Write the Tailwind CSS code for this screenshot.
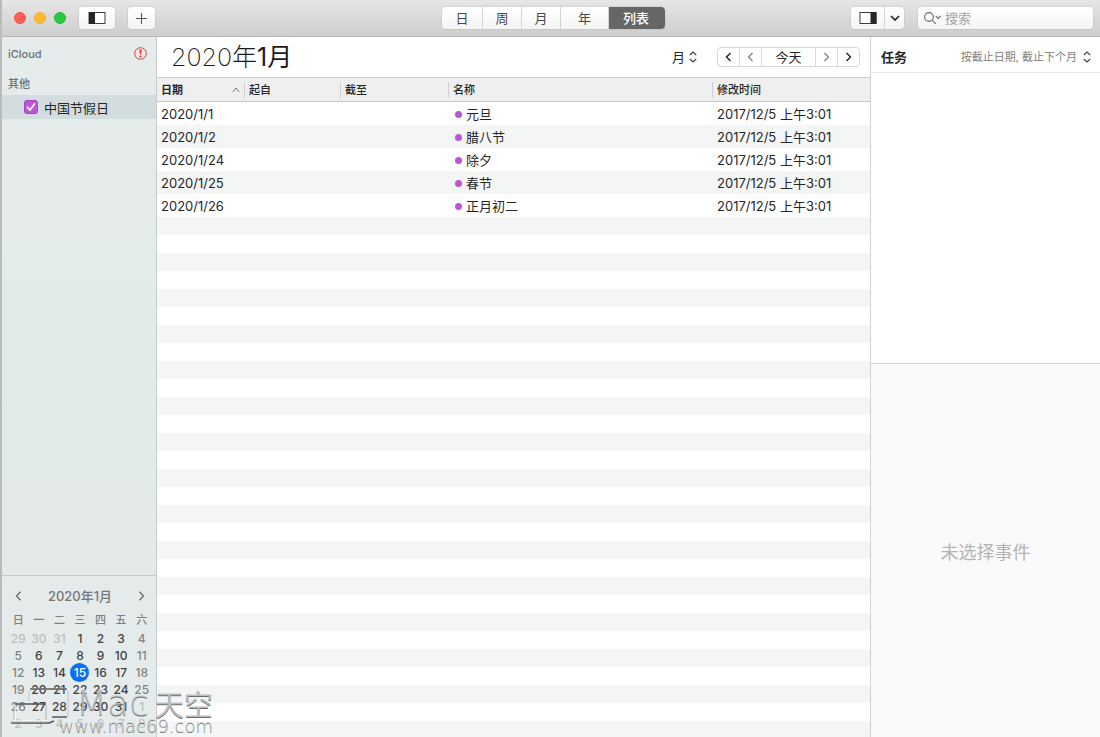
<!DOCTYPE html>
<html lang="zh-CN">
<head>
<meta charset="utf-8">
<meta name="viewport" content="width=device-width, initial-scale=1">
<title>日历</title>
<script src="https://cdn.jsdelivr.net/npm/@tailwindcss/browser@4"></script>
</head>
<body class="flex h-screen flex-col overflow-hidden border-l-2 border-[#b9bbbc] bg-white font-['Inter','Noto_Sans_CJK_SC',sans-serif] text-[13px] leading-5 text-[#262626]">

<header class="flex h-[37px] shrink-0 items-center border-b border-[#b4b4b4] bg-linear-to-b from-[#e6e6e6] to-[#cecece] pr-[7px] pl-3">
  <div class="flex flex-1 items-center">
    <div class="flex gap-2">
      <button aria-label="关闭" class="size-3 rounded-full border border-[#ee5750] bg-[#fc5e57]"></button>
      <button aria-label="最小化" class="size-3 rounded-full border border-[#efae2c] bg-[#fdbc2f]"></button>
      <button aria-label="缩放" class="size-3 rounded-full border border-[#25b93b] bg-[#28c840]"></button>
    </div>
    <button aria-label="显示日历列表" class="ml-[13px] flex h-[22px] w-9 items-center justify-center rounded bg-linear-to-b from-white to-[#f4f4f4] shadow-[0_0_1px_1px_rgba(0,0,0,0.06)]">
      <svg width="18" height="14" viewBox="0 0 18 14"><rect x="1" y="1.5" width="16" height="11" fill="#fff" stroke="#3c3c3c"/><rect x="1" y="1" width="6" height="12" fill="#262626"/></svg>
    </button>
    <button aria-label="新建事件" class="ml-[13px] flex h-[22px] w-[27px] items-center justify-center rounded bg-linear-to-b from-white to-[#f4f4f4] shadow-[0_0_1px_1px_rgba(0,0,0,0.06)]">
      <svg width="13" height="13" viewBox="0 0 13 13" stroke="#555" stroke-width="1.1"><path d="M6.5 1v11M1 6.5h11"/></svg>
    </button>
  </div>
  <nav aria-label="视图" class="flex h-[22px] divide-x divide-[#d4d4d4] overflow-hidden rounded bg-linear-to-b from-white to-[#f4f4f4] text-[#484848] shadow-[0_0_1px_1px_rgba(0,0,0,0.06)]">
    <button class="w-[41px]">日</button>
    <button class="w-[39px]">周</button>
    <button class="w-[39px]">月</button>
    <button class="w-12">年</button>
    <button aria-pressed="true" class="w-14 bg-[#666] pr-[2px] font-medium text-white">列表</button>
  </nav>
  <div class="flex flex-1 justify-end gap-[14px]">
    <div class="flex h-[22px] divide-x divide-[#d4d4d4] rounded bg-linear-to-b from-white to-[#f4f4f4] shadow-[0_0_1px_1px_rgba(0,0,0,0.06)]">
      <button aria-label="显示任务" class="flex w-[34px] items-center justify-center">
        <svg width="18" height="14" viewBox="0 0 18 14"><rect x="1" y="1.5" width="16" height="11" fill="#fff" stroke="#3c3c3c"/><rect x="11.500" y="1" width="6" height="12" fill="#262626"/></svg>
      </button>
      <button aria-label="更多选项" class="flex w-[19px] items-center justify-center">
        <svg width="10" height="8" viewBox="0 0 10 8" fill="none" stroke="#262626" stroke-width="1.7"><path d="M1 2l4 4 4-4"/></svg>
      </button>
    </div>
    <label class="flex h-[22px] w-[175px] items-center rounded bg-linear-to-b from-white to-[#f4f4f4] pl-[6px] shadow-[0_0_1px_1px_rgba(0,0,0,0.06)]">
      <svg class="shrink-0" width="18" height="14" viewBox="0 0 18 14" fill="none" stroke="#6a6a6a" stroke-width="1.1"><circle cx="5" cy="6" r="4.400"/><path d="M8.200 9.200l3.600 3.600M11.800 5l2.400 2.400L16.600 5"/></svg>
      <input type="search" aria-label="搜索" placeholder="搜索" class="ml-[3px] min-w-0 flex-1 bg-transparent outline-none placeholder:text-[#a3a3a3]">
    </label>
  </div>
</header>

<div class="flex min-h-0 flex-1">
  <aside class="flex w-[155px] shrink-0 flex-col border-r border-[#c5cbcc] bg-linear-to-b from-[#e5eceb] via-[#e3eaea] to-[#e6ebeb]">
    <div class="flex h-[34px] items-center justify-between pr-[9px] pl-[6px] text-[11px] font-medium text-[#6b7172]">
      <h2>iCloud</h2>
      <svg class="mb-[2px]" width="13" height="13" viewBox="0 0 13 13"><circle cx="6.500" cy="6.500" r="5.800" fill="none" stroke="#f5312d"/><path d="M5.300 2.500h2.400L7.100 7.600H5.900z" fill="#f5312d"/><circle cx="6.500" cy="9.500" r="1.100" fill="#f5312d"/></svg>
    </div>
    <h2 class="flex h-6 items-center pt-[2px] pl-[6px] text-[11px] font-medium text-[#6b7172]">其他</h2>
    <label class="flex h-6 items-center gap-[6px] bg-[#d3dddf] pl-[22px]">
      <span class="grid size-[14px]">
        <input type="checkbox" checked class="col-start-1 row-start-1 size-[14px] appearance-none rounded-[3px] border border-[#a843c4] bg-[#bc56d8]">
        <svg class="pointer-events-none col-start-1 row-start-1" width="14" height="14" viewBox="0 0 14 14" fill="none" stroke="#fff" stroke-width="1.800" stroke-linecap="round" stroke-linejoin="round"><path d="M3.500 7.300l2.500 2.700 4.500-6"/></svg>
      </span>
      <span class="pt-px">中国节假日</span>
    </label>
    <section class="mt-auto h-[162px] border-t border-[#c7cdce] pt-[10px] pr-[4px] pl-[6px]">
      <div class="flex h-5 items-center justify-between px-[7px] text-[#737979]">
        <button aria-label="上个月"><svg width="7" height="10" viewBox="0 0 7 10" fill="none" stroke="#636969" stroke-width="1.300"><path d="M5.500 .800L1.500 5l4 4.200"/></svg></button>
        <h3 class="font-medium">2020年1月</h3>
        <button aria-label="下个月"><svg width="7" height="10" viewBox="0 0 7 10" fill="none" stroke="#636969" stroke-width="1.300"><path d="M1.500 .800L5.500 5l-4 4.200"/></svg></button>
      </div>
      <table class="mt-[5px] w-full table-fixed text-center text-[12px] leading-[17px] font-medium text-[#3f4242]">
        <thead><tr class="h-[19px] text-[11px] text-[#7c8282]"><th class="p-0 font-medium">日</th><th class="p-0 font-medium">一</th><th class="p-0 font-medium">二</th><th class="p-0 font-medium">三</th><th class="p-0 font-medium">四</th><th class="p-0 font-medium">五</th><th class="p-0 font-medium">六</th></tr></thead>
        <tbody>
          <tr class="text-[#bcc1c1]"><td>29</td><td>30</td><td>31</td><td class="text-[#3f4242]">1</td><td class="text-[#3f4242]">2</td><td class="text-[#3f4242]">3</td><td class="text-[#7f8585]">4</td></tr>
          <tr><td class="text-[#7f8585]">5</td><td>6</td><td>7</td><td>8</td><td>9</td><td>10</td><td class="text-[#7f8585]">11</td></tr>
          <tr><td class="text-[#7f8585]">12</td><td>13</td><td>14</td><td><span class="-my-px mx-auto block size-[19px] rounded-full bg-[#0a6ff5] leading-[19px] text-white">15</span></td><td>16</td><td>17</td><td class="text-[#7f8585]">18</td></tr>
          <tr><td class="text-[#7f8585]">19</td><td>20</td><td>21</td><td>22</td><td>23</td><td>24</td><td class="text-[#7f8585]">25</td></tr>
          <tr><td class="text-[#7f8585]">26</td><td>27</td><td>28</td><td>29</td><td>30</td><td>31</td><td class="text-[#bcc1c1]">1</td></tr>
          <tr class="text-[#bcc1c1]"><td>2</td><td>3</td><td>4</td><td>5</td><td>6</td><td>7</td><td>8</td></tr>
        </tbody>
      </table>
    </section>
  </aside>

  <main class="flex min-w-0 flex-1 flex-col">
    <div class="flex h-[41px] shrink-0 items-center border-b border-[#cfcfcf] pr-[10px] pl-[14px]">
      <h1 class="flex-1 text-[25px] leading-8 font-extralight text-[#1c1c1c]">2020年<span class="font-normal">1月</span></h1>
      <button class="mr-5 flex items-center gap-1">月
        <svg width="8" height="12" viewBox="0 0 8 12" fill="none" stroke="#444" stroke-width="1.200"><path d="M.800 4L4 1l3.200 3M.800 8L4 11l3.200-3"/></svg>
      </button>
      <div class="flex h-5 divide-x divide-[#dcdcdc] rounded border border-[#d6d6d6]">
        <button aria-label="上一年" class="flex w-[22px] items-center justify-center"><svg width="7" height="10" viewBox="0 0 7 10" fill="none" stroke="#222" stroke-width="1.400"><path d="M5.500 1L1.500 5l4 4"/></svg></button>
        <button aria-label="上个月" class="flex w-[22px] items-center justify-center"><svg width="7" height="10" viewBox="0 0 7 10" fill="none" stroke="#777" stroke-width="1.100"><path d="M5.500 1L1.500 5l4 4"/></svg></button>
        <button class="w-[54px] leading-[18px]">今天</button>
        <button aria-label="下个月" class="flex w-[22px] items-center justify-center"><svg width="7" height="10" viewBox="0 0 7 10" fill="none" stroke="#777" stroke-width="1.100"><path d="M1.500 1l4 4-4 4"/></svg></button>
        <button aria-label="下一年" class="flex w-[21px] items-center justify-center"><svg width="7" height="10" viewBox="0 0 7 10" fill="none" stroke="#222" stroke-width="1.400"><path d="M1.500 1l4 4-4 4"/></svg></button>
      </div>
    </div>
    <table class="w-full table-fixed text-left">
      <colgroup><col class="w-[88px]"><col class="w-[96px]"><col class="w-[108px]"><col class="w-[264px]"><col></colgroup>
      <thead class="bg-[#efefef] text-[11px] leading-4 shadow-[0_-1px_0_#c8c8c8_inset]">
        <tr class="h-6">
          <th class="p-0 font-bold"><span class="flex items-center justify-between border-r border-[#d0d0d0] pr-1 pl-1">日期 <svg width="8" height="6" viewBox="0 0 8 6" fill="none" stroke="#777"><path d="M.800 5L4 1l3.200 4"/></svg></span></th>
          <th class="p-0 font-medium"><span class="block border-r border-[#d0d0d0] pl-1">起自</span></th>
          <th class="p-0 font-medium"><span class="block border-r border-[#d0d0d0] pl-1">截至</span></th>
          <th class="p-0 font-medium"><span class="block border-r border-[#d0d0d0] pl-1">名称</span></th>
          <th class="p-0 pl-1 font-medium">修改时间</th>
        </tr>
      </thead>
      <tbody>
        <tr class="h-[23px] even:bg-[#f4f5f5]"><td class="p-0 pt-px pl-1">2020/1/1</td><td></td><td></td><td class="p-0 pt-px pl-[6px]"><span class="flex items-center gap-1"><i class="size-[7px] rounded-full bg-[#bb55db]"></i>元旦</span></td><td class="p-0 pt-px pl-1">2017/12/5 上午3:01</td></tr>
        <tr class="h-[23px] even:bg-[#f4f5f5]"><td class="p-0 pt-px pl-1">2020/1/2</td><td></td><td></td><td class="p-0 pt-px pl-[6px]"><span class="flex items-center gap-1"><i class="size-[7px] rounded-full bg-[#bb55db]"></i>腊八节</span></td><td class="p-0 pt-px pl-1">2017/12/5 上午3:01</td></tr>
        <tr class="h-[23px] even:bg-[#f4f5f5]"><td class="p-0 pt-px pl-1">2020/1/24</td><td></td><td></td><td class="p-0 pt-px pl-[6px]"><span class="flex items-center gap-1"><i class="size-[7px] rounded-full bg-[#bb55db]"></i>除夕</span></td><td class="p-0 pt-px pl-1">2017/12/5 上午3:01</td></tr>
        <tr class="h-[23px] even:bg-[#f4f5f5]"><td class="p-0 pt-px pl-1">2020/1/25</td><td></td><td></td><td class="p-0 pt-px pl-[6px]"><span class="flex items-center gap-1"><i class="size-[7px] rounded-full bg-[#bb55db]"></i>春节</span></td><td class="p-0 pt-px pl-1">2017/12/5 上午3:01</td></tr>
        <tr class="h-[23px] even:bg-[#f4f5f5]"><td class="p-0 pt-px pl-1">2020/1/26</td><td></td><td></td><td class="p-0 pt-px pl-[6px]"><span class="flex items-center gap-1"><i class="size-[7px] rounded-full bg-[#bb55db]"></i>正月初二</span></td><td class="p-0 pt-px pl-1">2017/12/5 上午3:01</td></tr>
      </tbody>
    </table>
    <div class="flex-1 bg-[repeating-linear-gradient(#f4f5f5_0_18px,#fff_18px_36px)]"></div>
  </main>

  <aside class="flex w-[230px] shrink-0 flex-col border-l border-[#d2d2d2]">
    <div class="flex h-9 shrink-0 items-center justify-between border-b border-[#e4e4e4] pt-1 pr-[9px] pl-[10px]">
      <h2 class="font-bold">任务</h2>
      <button class="flex items-center gap-[6px] text-[11px] text-[#808080]">按截止日期, 截止下个月
        <svg width="8" height="12" viewBox="0 0 8 12" fill="none" stroke="#444" stroke-width="1.200"><path d="M.800 4L4 1l3.200 3M.800 8L4 11l3.200-3"/></svg>
      </button>
    </div>
    <div class="h-[290px] shrink-0"></div>
    <section class="flex flex-1 items-center justify-center border-t border-[#d4d4d4] bg-[#fafafa] pt-1 text-[18px] text-[#b4b4b4]">未选择事件</section>
  </aside>
</div>

<div class="pointer-events-none absolute bottom-0 left-2 h-[50px] w-[210px] font-['DejaVu_Sans','Noto_Sans_CJK_SC',sans-serif]">
  <svg class="absolute top-0 left-0" width="62" height="40" viewBox="0 0 62 40" fill="none">
    <path d="M21 14V2h39v26M7 18v16h32" stroke="#fff" stroke-opacity=".6" stroke-width="2"/>
    <path d="M22 2h37M7 17h31M3 36h38l5-2M44 30h15" stroke="#555" stroke-width="1.400"/>
    <path d="M21 3v11M60 3v26M6 18v15M38 18v15M3 35h38" stroke="#a3a7a7" stroke-opacity=".8"/>
  </svg>
  <div class="absolute top-0 right-[5px] flex h-8 items-center gap-[6px] font-extralight whitespace-nowrap text-[#cfd2d2]/80 [text-shadow:0_1px_0_rgba(80,80,80,0.85)]">
    <span class="text-[36px] leading-8">Mac</span><span class="font-['Noto_Sans_CJK_SC'] text-[29px] leading-8 font-normal">天空</span>
  </div>
  <div class="absolute right-[5px] -bottom-px text-[18px] leading-6 font-extralight text-[#cfd2d2]/80 [text-shadow:0_1px_0_rgba(80,80,80,0.85)]">www.mac69.com</div>
</div>
</body>
</html>
